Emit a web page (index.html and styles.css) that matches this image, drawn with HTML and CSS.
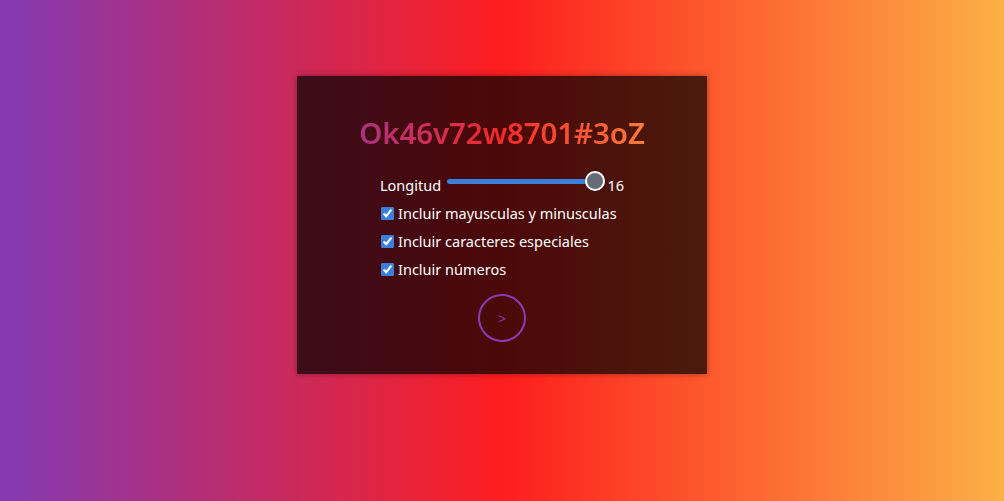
FILE: index.html
```html
<!DOCTYPE html>
<html lang="es">
<head>
<meta charset="utf-8">
<title>Generador de contraseñas</title>
<link rel="stylesheet" href="styles.css">
</head>
<body>
<main class="page">
  <section class="card">
    <h1 class="password">Ok46v72w8701#3oZ</h1>
    <div class="controls">
      <div class="row">
        <label class="label" for="len">Longitud</label>
        <input class="range" id="len" type="range" min="4" max="16" value="16">
        <span class="value">16</span>
      </div>
      <label class="row check"><input type="checkbox" checked><span>Incluir mayusculas y minusculas</span></label>
      <label class="row check"><input type="checkbox" checked><span>Incluir caracteres especiales</span></label>
      <label class="row check"><input type="checkbox" checked><span>Incluir números</span></label>
    </div>
    <button class="go" type="button">&gt;</button>
  </section>
</main>
</body>
</html>
```
FILE: styles.css
```css
html, body {
  margin: 0;
  height: 100%;
}
body {
  background: linear-gradient(to right, #833ab4, #fd1d1d, #fcb045);
  font-family: "Noto Sans", "Liberation Sans", sans-serif;
  color: #fff;
}
.page {
  display: flex;
  justify-content: center;
  padding-top: 76px;
}
.card {
  width: 410px;
  height: 298px;
  box-sizing: border-box;
  background: rgba(0, 0, 0, 0.7);
  box-shadow: 0 0 6px rgba(0, 0, 0, 0.35);
  display: flex;
  flex-direction: column;
  align-items: center;
  padding-top: 38px;
}
.password {
  margin: 0;
  font-size: 29.5px;
  font-weight: 600;
  line-height: 38px;
  letter-spacing: -0.1px;
  background: linear-gradient(to right, #a8337f, #f42a2a 50%, #fb7b3c);
  -webkit-background-clip: text;
  background-clip: text;
  color: transparent;
}
.controls {
  margin-top: 19px;
  width: 244px;
  display: flex;
  flex-direction: column;
  font-size: 14.5px;
}
.row {
  display: flex;
  align-items: center;
  height: 28px;
}
.label {
  margin-right: 6px;
}
.value {
  margin-left: 2px;
}
.range {
  -webkit-appearance: none;
  appearance: none;
  width: 160px;
  height: 20px;
  margin: -8px 0 0 0;
  background: transparent;
}
.range::-webkit-slider-runnable-track {
  height: 5px;
  border-radius: 3px;
  background: #3a7fdc;
}
.range::-webkit-slider-thumb {
  -webkit-appearance: none;
  appearance: none;
  width: 20px;
  height: 20px;
  box-sizing: border-box;
  border-radius: 50%;
  background: #676b78;
  border: 2px solid #fff;
  margin-top: -7.5px;
}
.check input {
  width: 13px;
  height: 13px;
  margin: 0 4px 0 1px;
  accent-color: #3a7fdc;
}
.go {
  margin-top: 11px;
  width: 48px;
  height: 48px;
  border-radius: 50%;
  border: 2px solid #8a3ab8;
  background: transparent;
  color: #8a3ab8;
  font-family: "Noto Sans", sans-serif;
  font-size: 14px;
  padding: 0;
  cursor: pointer;
}
```
